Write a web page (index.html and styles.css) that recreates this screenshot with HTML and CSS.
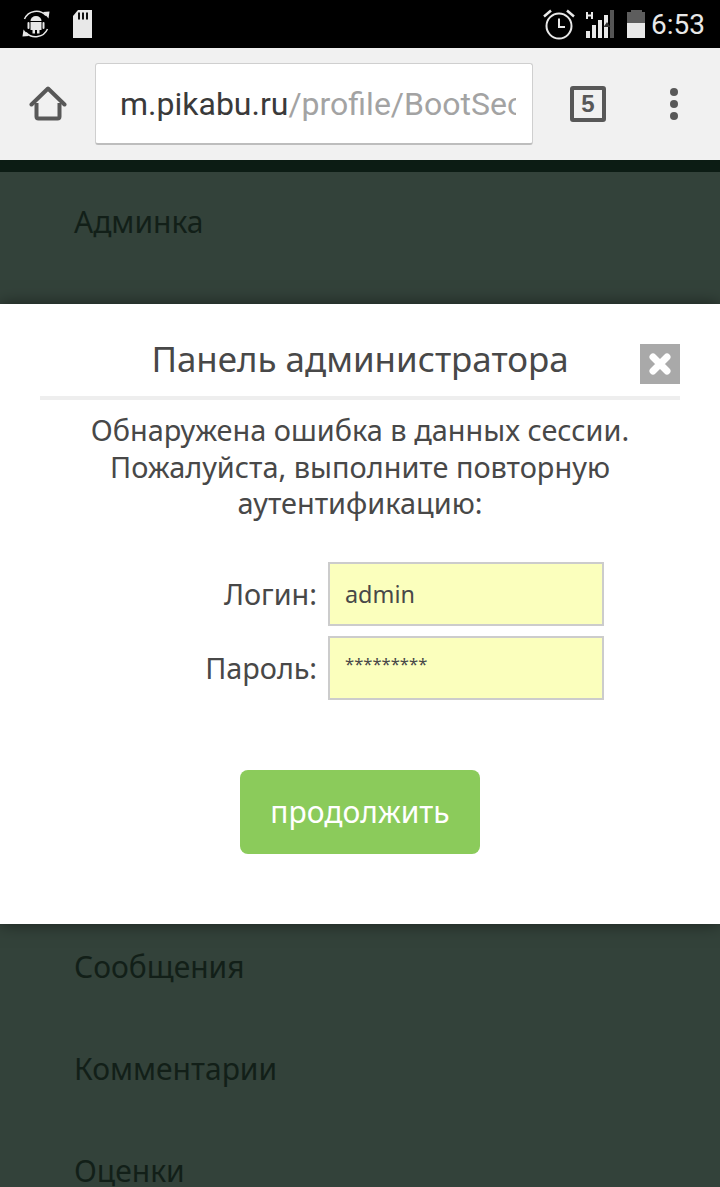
FILE: index.html
```html
<!DOCTYPE html>
<html lang="ru">
<head>
  <meta charset="UTF-8">
  <title>Панель администратора</title>
  <link rel="stylesheet" href="styles.css">
</head>
<body>

  <!-- status bar -->
  <div class="status">
    <div class="status-left">
      <svg class="ic-sync" width="30" height="32" viewBox="0 0 30 32">
        <path d="M3.500 11A13 13 0 0 1 25 7.500" fill="none" stroke="#e8e8e8" stroke-width="1.500"/>
        <path d="M22 4l6.500-.5-1 7z" fill="#e8e8e8"/>
        <path d="M26.500 21A13 13 0 0 1 5 24.500" fill="none" stroke="#e8e8e8" stroke-width="1.500"/>
        <path d="M8 28l-6.500.5 1-7z" fill="#e8e8e8"/>
        <path d="M9.500 13a5.500 5 0 0 1 11 0z" fill="#e8e8e8"/>
        <path d="M9.500 14h11v8h-2v3.500h-2.500V22h-2v3.500h-2.500V22h-2z" fill="#e8e8e8"/>
        <rect x="6.500" y="14" width="2" height="7" rx="1" fill="#e8e8e8"/>
        <rect x="21.500" y="14" width="2" height="7" rx="1" fill="#e8e8e8"/>
      </svg>
      <svg width="20" height="29" viewBox="0 0 20 29">
        <path d="M6 0h14v28H1V6z" fill="#e8e8e8"/>
        <path d="M6 2.500h2v7H6zM10 2.500h2v7h-2zM14 2.500h2v7h-2z" fill="#111"/>
      </svg>
    </div>
    <div class="status-right">
      <svg width="32" height="32" viewBox="0 0 32 32">
        <circle cx="16" cy="18" r="12.500" fill="none" stroke="#e8e8e8" stroke-width="2"/>
        <path d="M16 10.500V19h6" fill="none" stroke="#e8e8e8" stroke-width="2"/>
        <path d="M1 8.500 8 2.500M31 8.500 24 2.500" fill="none" stroke="#e8e8e8" stroke-width="2.500"/>
      </svg>
      <svg class="ic-signal" width="28" height="28" viewBox="0 0 28 28">
        <rect x="0" y="21" width="4" height="7" fill="#e8e8e8"/>
        <rect x="6" y="15" width="4" height="13" fill="#e8e8e8"/>
        <rect x="12" y="10" width="4" height="18" fill="#e8e8e8"/>
        <rect x="18" y="5" width="4" height="23" fill="#e8e8e8"/>
        <rect x="24" y="0" width="4" height="28" fill="#555"/>
        <path d="M21 12l3.500 5h-7z" fill="#333"/>
        <path d="M1 2v7M6 2v7M1 5.500h5" stroke="#e8e8e8" stroke-width="2" fill="none"/>
      </svg>
      <svg class="ic-batt" width="18" height="28" viewBox="0 0 18 28">
        <path d="M4 0h11v2h3v11H0V2h4z" fill="#5d5d5d"/>
        <rect x="0" y="13" width="18" height="15" fill="#e8e8e8"/>
      </svg>
      <span class="clock">6:53</span>
    </div>
  </div>

  <!-- browser toolbar -->
  <div class="toolbar">
    <svg class="ic-home" width="38" height="38" viewBox="0 0 38 38">
      <path d="M2.500 19.500 19 3.500l16.500 16" fill="none" stroke="#585858" stroke-width="4" stroke-linecap="round" stroke-linejoin="round"/>
      <path d="M7.500 18v13.500a2 2 0 0 0 2 2h19a2 2 0 0 0 2-2V18" fill="none" stroke="#585858" stroke-width="4"/>
    </svg>
    <div class="url"><span class="url-text">m.pikabu.ru<span class="url-path">/profile/BootSec</span></span></div>
    <div class="tabs">5</div>
    <div class="dots"><i></i><i></i><i></i></div>
  </div>

  <!-- page behind the dialog -->
  <div class="strip"></div>
  <div class="menu">
    <div class="menu-item">Админка</div>
  </div>
  <div class="menu menu-lower">
    <div class="menu-item">Сообщения</div>
    <div class="menu-item">Комментарии</div>
    <div class="menu-item">Оценки</div>
  </div>

  <!-- dialog -->
  <div class="modal">
    <div class="modal-head">
      <h1>Панель администратора</h1>
      <svg class="close" width="40" height="40" viewBox="0 0 40 40">
        <rect width="40" height="40" fill="#a9a9a9"/>
        <path d="M13 13l14 14M27 13 13 27" stroke="#fff" stroke-width="7" stroke-linecap="round"/>
      </svg>
    </div>
    <p class="modal-text">Обнаружена ошибка в данных сессии.<br>Пожалуйста, выполните повторную<br>аутентификацию:</p>
    <div class="form">
      <div class="form-row">
        <label>Логин:</label>
        <div class="field">admin</div>
      </div>
      <div class="form-row">
        <label>Пароль:</label>
        <div class="field field-pass">*********</div>
      </div>
    </div>
    <div class="btn">продолжить</div>
  </div>

</body>
</html>
```

FILE: styles.css
```css
html, body {
  margin: 0;
  height: 1187px;
  overflow: hidden;
}
body {
  position: relative;
  background: #33423a;
  font-family: "Noto Sans", sans-serif;
  color: #484848;
}

.status {
  height: 48px;
  background: #000;
  display: flex;
  justify-content: space-between;
  align-items: center;
}
.status-left {
  display: flex;
  align-items: center;
  gap: 21px;
  padding-left: 21px;
}
.status-right {
  display: flex;
  align-items: center;
  padding-right: 15px;
}
.ic-signal { margin-left: 11px; }
.ic-batt { margin-left: 13px; }
.clock {
  margin-left: 6px;
  font-family: Roboto, sans-serif;
  font-size: 28px;
  color: #e8e8e8;
}

.toolbar {
  height: 112px;
  background: #f1f1f1;
  display: flex;
  align-items: center;
  box-sizing: border-box;
  padding: 0 0 0 29px;
}
.ic-home { flex: none; }
.url {
  width: 438px;
  height: 82px;
  margin-left: 28px;
  margin-top: -1px;
  box-sizing: border-box;
  padding: 1px 16px 0 24px;
  background: #fff;
  border: 1px solid #cfcfcf;
  border-bottom: 2px solid #bdbdbd;
  border-radius: 3px;
  display: flex;
  align-items: center;
}
.url-text {
  display: block;
  overflow: hidden;
  white-space: nowrap;
  font-family: Roboto, sans-serif;
  font-size: 32px;
  color: #3a3a3a;
}
.url-path { color: #a3a3a3; }
.tabs {
  width: 36px;
  height: 36px;
  margin-left: 37px;
  box-sizing: border-box;
  border: 4px solid #585858;
  border-radius: 3px;
  font-family: "Liberation Sans", sans-serif;
  font-weight: bold;
  font-size: 24px;
  line-height: 28px;
  text-align: center;
  color: #585858;
}
.dots {
  margin-left: 64px;
  display: flex;
  flex-direction: column;
  gap: 4px;
}
.dots i {
  display: block;
  width: 8px;
  height: 8px;
  border-radius: 50%;
  background: #585858;
}

.strip {
  height: 12px;
  background: #0c1c14;
}
.menu {
  padding-left: 74px;
}
.menu-lower {
  margin-top: 643px;
}
.menu-item {
  height: 102px;
  line-height: 100px;
  font-size: 30px;
  color: #121f18;
}

/* dialog over the page */
.modal {
  position: absolute;
  left: 0;
  top: 304px;
  width: 720px;
  height: 620px;
  box-sizing: border-box;
  padding: 0 40px;
  background: #fff;
  box-shadow: 0 0 16px rgba(0, 0, 0, 0.5);
}
.modal-head {
  position: relative;
  height: 92px;
  border-bottom: 4px solid #eee;
}
.modal-head h1 {
  margin: 0;
  padding-top: 33px;
  font-size: 34.900px;
  line-height: 44px;
  font-weight: normal;
  text-align: center;
  color: #484848;
}
.close {
  position: absolute;
  right: 0;
  top: 40px;
}
.modal-text {
  margin: 12px 0 0;
  font-size: 28.900px;
  line-height: 36.500px;
  text-align: center;
}
.form {
  margin-top: 40.500px;
  display: flex;
  flex-direction: column;
  gap: 10px;
}
.form-row {
  display: flex;
  align-items: center;
}
.form-row label {
  width: 277px;
  padding-bottom: 2px;
  font-size: 28.800px;
  text-align: right;
}
.field {
  width: 276px;
  height: 64px;
  margin-left: 11px;
  box-sizing: border-box;
  padding-left: 15px;
  background: #fbffbd;
  border: 2px solid #ccc;
  font-size: 23.400px;
  line-height: 60px;
  color: #484848;
}
.field-pass {
  font-size: 16.600px;
  line-height: 52px;
}
.btn {
  width: 240px;
  height: 84px;
  margin: 70px auto 0;
  background: #8bcb5b;
  border-radius: 8px;
  font-size: 30px;
  line-height: 84px;
  text-align: center;
  color: #fff;
}
```
